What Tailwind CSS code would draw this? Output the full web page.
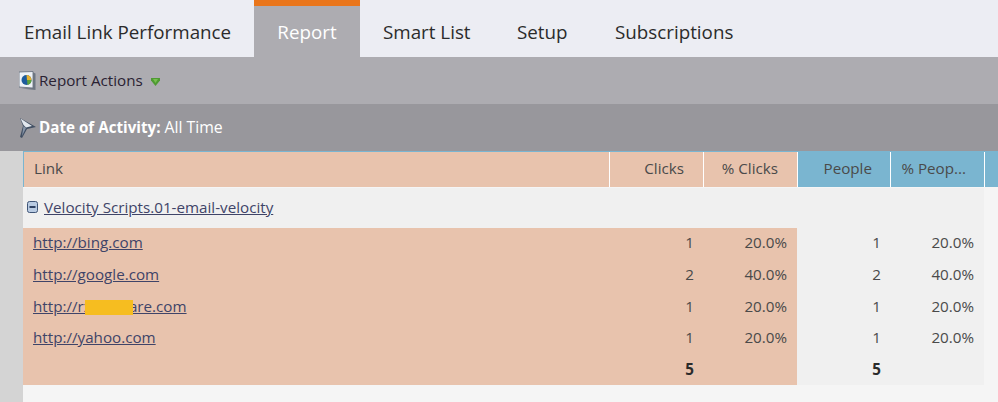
<!DOCTYPE html>
<html lang="en">
<head>
  <meta charset="UTF-8">
  <title>Email Link Performance</title>
  <script src="https://cdn.jsdelivr.net/npm/@tailwindcss/browser@4"></script>
</head>
<body class="w-[998px] h-[402px] overflow-hidden bg-[#f5f5f5] font-['Open_Sans',sans-serif] text-[15.2px] text-[#4a4a4a]">

  <!-- Tabs -->
  <div class="flex h-[57px] bg-[#ecedf3] text-[18.8px] text-[#2b2b2b]">
    <div class="w-[254px] pl-[24px] pt-[18px]">Email Link Performance</div>
    <div class="w-[106px] border-t-[6px] border-[#e9751a] bg-[#adacb1] pt-[12px] text-center text-white">Report</div>
    <div class="w-[134px] pl-[23px] pt-[18px]">Smart List</div>
    <div class="w-[98px] pl-[23px] pt-[18px]">Setup</div>
    <div class="pl-[23px] pt-[18px]">Subscriptions</div>
  </div>

  <!-- Toolbar -->
  <div class="flex h-[47px] items-center bg-[#adacb1] pl-[19px] text-[#2a2233]">
    <svg width="17" height="20" viewBox="0 0 17 20" class="mr-[3px]">
      <path d="M0 1L14 0.500V17L0 16z" fill="#eef2f6" stroke="#5f6a78" stroke-width="0.800"/>
      <path d="M14 1.500L16.500 2.500V19L2 17.500L14 17z" fill="#6e7682"/>
      <circle cx="7.500" cy="9" r="5" fill="#1d5c9c"/>
      <path d="M7.500 4a5 5 0 0 1 5 5H8z" fill="#e8b22e"/>
      <path d="M8 9h4.500a5 5 0 0 1-4 4.900z" fill="#5ea33a"/>
    </svg>
    <span>Report Actions</span>
    <svg width="9" height="8" viewBox="0 0 9 8" class="ml-[8px] mt-[2px]">
      <path d="M0 0h9v2.500L4.500 8 0 2.500z" fill="#4f9a33"/>
      <path d="M2 1h5L4.500 5z" fill="#76c04f"/>
    </svg>
  </div>

  <!-- Filter bar -->
  <div class="flex h-[47px] items-center bg-[#98979c] pl-[19px] text-white">
    <svg width="17" height="22" viewBox="0 0 17 22" class="mr-[3px]">
      <path d="M1 1L17 10L8 12L3 21L1 20L4 9z" fill="#414f63"/>
      <path d="M1.500 1.500L13 9L7 10.500L4.500 8z" fill="#e3e8ee"/>
      <path d="M4.500 9L7 11L3 19z" fill="#8593a6"/>
    </svg>
    <span><b class="font-bold text-[15.2px]">Date of Activity:</b> <span class="text-[15.8px]">All Time</span></span>
  </div>

  <div class="flex">
    <div class="w-[23px] h-[251px] bg-[#d4d4d4]"></div>

    <div class="w-[975px]">
      <!-- Header -->
      <div class="grid h-[37px] grid-cols-[587px_94px_94px_93px_94px_13px] border-t border-[#7ab5d0] border-b border-b-[#f5f5f5]">
        <div class="flex items-center bg-[#e8c3ad] pb-[2px] pl-[10px] border-l border-[#7ab5d0] border-r border-r-white">Link</div>
        <div class="flex items-center justify-end bg-[#e8c3ad] pb-[2px] pr-[19px] border-r border-white">Clicks</div>
        <div class="flex items-center justify-end bg-[#e8c3ad] pb-[2px] pr-[19px] border-r border-white">% Clicks</div>
        <div class="flex items-center justify-end bg-[#7ab5d0] pb-[2px] pr-[18px] border-r border-white">People</div>
        <div class="flex items-center justify-end bg-[#7ab5d0] pb-[2px] pr-[18px] border-r border-white">% Peop...</div>
        <div class="bg-[#7ab5d0]"></div>
      </div>

      <!-- Group row -->
      <div class="flex h-[40px] w-[961px] items-center bg-[#f0f0f0] pb-[2px] pl-[4px]">
        <svg width="11" height="12" viewBox="0 0 11 12" class="mr-[6px]">
          <rect x="0.500" y="0.500" width="10" height="11" rx="2" fill="#b9cbe2" stroke="#3f5577"/>
          <rect x="2.500" y="5" width="6" height="2" fill="#2f4263"/>
        </svg>
        <a href="#" class="text-[#3f4468] underline">Velocity Scripts.01-email-velocity</a>
      </div>

      <!-- Rows -->
      <div class="grid h-[157px] w-[961px] grid-cols-[587px_94px_93px_94px_93px] grid-rows-[29px_34px_31px_31px_32px] items-center">
        <div class="flex h-full items-center bg-[#e8c3ad] pl-[10px]"><a href="#" class="text-[#3f4468] underline">http://bing.com</a></div>
        <div class="flex h-full items-center justify-end bg-[#e8c3ad] pr-[10px]">1</div>
        <div class="flex h-full items-center justify-end bg-[#e8c3ad] pr-[10px]">20.0%</div>
        <div class="flex h-full items-center justify-end bg-[#f0f0f0] pr-[10px]">1</div>
        <div class="flex h-full items-center justify-end bg-[#f0f0f0] pr-[10px]">20.0%</div>

        <div class="flex h-full items-center bg-[#e8c3ad] pl-[10px]"><a href="#" class="text-[#3f4468] underline">http://google.com</a></div>
        <div class="flex h-full items-center justify-end bg-[#e8c3ad] pr-[10px]">2</div>
        <div class="flex h-full items-center justify-end bg-[#e8c3ad] pr-[10px]">40.0%</div>
        <div class="flex h-full items-center justify-end bg-[#f0f0f0] pr-[10px]">2</div>
        <div class="flex h-full items-center justify-end bg-[#f0f0f0] pr-[10px]">40.0%</div>

        <div class="flex h-full items-center bg-[#e8c3ad] pl-[10px]">
          <a href="#" class="relative text-[#3f4468] underline">http://rxxxxxtare.com<span class="absolute left-[52px] top-[5px] h-[15px] w-[48px] bg-[#f6bd20]"></span></a>
        </div>
        <div class="flex h-full items-center justify-end bg-[#e8c3ad] pr-[10px]">1</div>
        <div class="flex h-full items-center justify-end bg-[#e8c3ad] pr-[10px]">20.0%</div>
        <div class="flex h-full items-center justify-end bg-[#f0f0f0] pr-[10px]">1</div>
        <div class="flex h-full items-center justify-end bg-[#f0f0f0] pr-[10px]">20.0%</div>

        <div class="flex h-full items-center bg-[#e8c3ad] pl-[10px]"><a href="#" class="text-[#3f4468] underline">http://yahoo.com</a></div>
        <div class="flex h-full items-center justify-end bg-[#e8c3ad] pr-[10px]">1</div>
        <div class="flex h-full items-center justify-end bg-[#e8c3ad] pr-[10px]">20.0%</div>
        <div class="flex h-full items-center justify-end bg-[#f0f0f0] pr-[10px]">1</div>
        <div class="flex h-full items-center justify-end bg-[#f0f0f0] pr-[10px]">20.0%</div>

        <div class="h-full bg-[#e8c3ad]"></div>
        <div class="flex h-full items-center justify-end bg-[#e8c3ad] pr-[10px] font-bold text-[#2b2b2b]">5</div>
        <div class="h-full bg-[#e8c3ad]"></div>
        <div class="flex h-full items-center justify-end bg-[#f0f0f0] pr-[10px] font-bold text-[#2b2b2b]">5</div>
        <div class="h-full bg-[#f0f0f0]"></div>
      </div>
    </div>
  </div>

</body>
</html>
